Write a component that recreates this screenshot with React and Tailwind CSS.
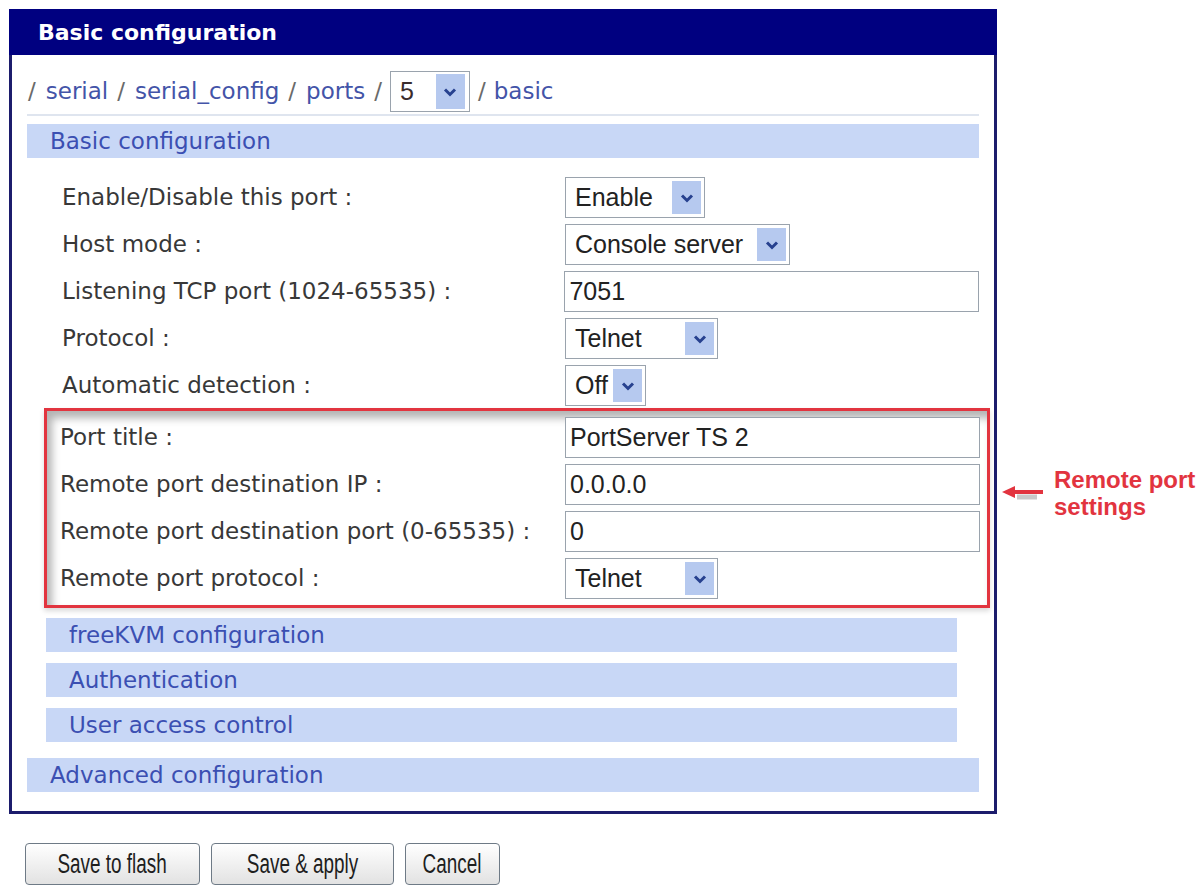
import React from "react";

const sans = "font-['DejaVu_Sans','Verdana',sans-serif]";
const ctl = "font-['Liberation_Sans','Arial',sans-serif]";

// little blue drop-down button used by every select
const DropBtn = () => (
  <span className="flex h-full w-[29px] items-center justify-center bg-[#b6c9ef]">
    <svg width="14" height="10" viewBox="0 0 14 10">
      <path d="M2 2.5 L7 7.5 L12 2.5" fill="none" stroke="#27418f" strokeWidth="3" />
    </svg>
  </span>
);

const Select = ({ value, width }) => (
  <div className={`flex h-[41px] items-center border border-[#9aa3ad] bg-white py-[3px] pr-[3px] ${width}`}>
    <span className={`flex-1 pl-[9px] text-[25px] leading-none text-[#222] ${ctl}`}>{value}</span>
    <DropBtn />
  </div>
);

const Input = ({ value }) => (
  <div className={`flex h-[41px] w-[415px] items-center border border-[#9aa3ad] bg-white pl-[4px] text-[25px] leading-none text-[#222] ${ctl}`}>
    {value}
  </div>
);

const Row = ({ label, inBox, children }) => (
  <div className="flex h-[47px] items-center">
    <div
      className={`whitespace-nowrap text-[23px] text-[#383838] ${sans} ${
        inBox ? "w-[518px] pl-[13px]" : "w-[538px] pl-[35px]"
      }`}
    >
      {label}
    </div>
    {children}
  </div>
);

const Bar = ({ title, sub }) => (
  <div
    className={`flex h-[34px] items-center bg-[#c8d7f6] text-[23px] text-[#3b4fb2] ${sans} ${
      sub ? "ml-[19px] w-[911px] pl-[23px]" : "pl-[23px]"
    }`}
  >
    {title}
  </div>
);

const Button = ({ label, width }) => (
  <button
    className={`flex h-[42px] items-center justify-center rounded-[4px] border border-[#6e7a86] bg-linear-to-b from-white to-[#e2e2e2] text-[27px] text-[#1e1e1e] ${ctl} ${width}`}
  >
    <span className="inline-block scale-x-70">{label}</span>
  </button>
);

export default function App() {
  return (
    <div className="relative min-h-screen bg-white pl-[9px] pt-[9px]">
      <div className="w-[988px]">
        <div className={`flex h-[46px] items-center bg-[#000080] pl-[29px] text-[22px] font-bold text-white ${sans}`}>
          Basic configuration
        </div>
        <div className="border-x-[3px] border-b-[3px] border-[#1c1c6c] px-[15px] pb-[19px] pt-[16px]">
          {/* path row */}
          <div className={`flex h-[41px] items-center text-[23px] ${sans}`}>
            <span className="ml-[1px] text-[#6a6a6a]">/</span>
            <span className="ml-[10px] text-[#4354a8]">serial</span>
            <span className="ml-[9px] text-[#6a6a6a]">/</span>
            <span className="ml-[10px] text-[#4354a8]">serial_config</span>
            <span className="ml-[9px] text-[#6a6a6a]">/</span>
            <span className="ml-[10px] text-[#4354a8]">ports</span>
            <span className="ml-[9px] text-[#6a6a6a]">/</span>
            <div className="ml-[8px] flex h-[41px] w-[80px] items-center border border-[#9aa3ad] bg-white py-[2px] pr-[4px]">
              <span className={`flex-1 pl-[9px] text-[25px] leading-none text-[#3a2c2c] ${ctl}`}>5</span>
              <DropBtn />
            </div>
            <span className="ml-[8px] text-[#6a6a6a]">/</span>
            <span className="ml-[8px] text-[#4354a8]">basic</span>
          </div>
          <div className="mt-[2px] h-[2px] bg-[#dfe5ef]" />
          <div className="mt-[8px]">
            <Bar title="Basic configuration" />
          </div>

          <div className="mt-[16px]">
            <Row label="Enable/Disable this port :">
              <Select value="Enable" width="w-[140px]" />
            </Row>
            <Row label="Host mode :">
              <Select value="Console server" width="w-[225px]" />
            </Row>
            <Row label="Listening TCP port (1024-65535) :">
              <Input value="7051" />
            </Row>
            <Row label="Protocol :">
              <Select value="Telnet" width="w-[153px]" />
            </Row>
            <Row label="Automatic detection :">
              <Select value="Off" width="w-[81px]" />
            </Row>
          </div>

          {/* remote port group */}
          <div className="-mt-[1px] ml-[17px] w-[946px] border-[3px] border-[#e2343f] py-[3px] shadow-[inset_5px_7px_9px_rgba(0,0,0,0.3),0_3px_5px_rgba(0,0,0,0.15)]">
            <Row inBox label="Port title :">
              <Input value="PortServer TS 2" />
            </Row>
            <Row inBox label="Remote port destination IP :">
              <Input value="0.0.0.0" />
            </Row>
            <Row inBox label="Remote port destination port (0-65535) :">
              <Input value="0" />
            </Row>
            <Row inBox label="Remote port protocol :">
              <Select value="Telnet" width="w-[153px]" />
            </Row>
          </div>

          <div className="mt-[10px] flex flex-col gap-[11px]">
            <Bar sub title="freeKVM configuration" />
            <Bar sub title="Authentication" />
            <Bar sub title="User access control" />
          </div>
          <div className="mt-[16px]">
            <Bar title="Advanced configuration" />
          </div>
        </div>
      </div>

      <div className="ml-[16px] mt-[29px] flex gap-[11px]">
        <Button label="Save to flash" width="w-[175px]" />
        <Button label="Save & apply" width="w-[183px]" />
        <Button label="Cancel" width="w-[95px]" />
      </div>

      {/* callout */}
      <div className="absolute left-[1001px] top-[466px] flex items-start">
        <svg width="46" height="40" viewBox="0 0 46 40" className="mt-[17px]">
          <path d="M16 14 L36 14" stroke="#8a8a8a" strokeWidth="5" opacity="0.45" />
          <path d="M12 9 L42 9" stroke="#e2343f" strokeWidth="4" />
          <path d="M1 9 L14 3 L14 15 Z" fill="#e2343f" />
        </svg>
        <div className={`ml-[7px] text-[24px] font-bold leading-[27px] text-[#e2343f] ${ctl}`}>
          Remote port
          <br />
          settings
        </div>
      </div>
    </div>
  );
}
